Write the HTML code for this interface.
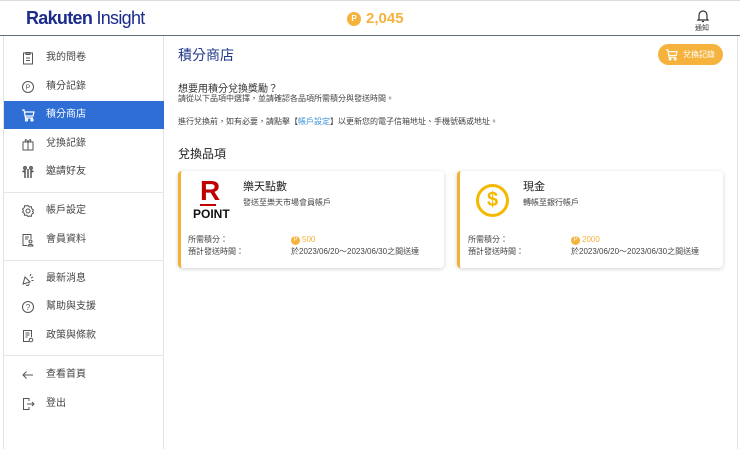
<!DOCTYPE html>
<html><head><meta charset="utf-8"><style>
*{margin:0;padding:0;box-sizing:border-box}
body{width:740px;height:449px;background:#fff;font-family:"Liberation Sans","Noto Sans CJK TC",sans-serif;position:relative;overflow:hidden;color:#333}
.a{position:absolute}
.hdr{left:0;top:0;width:740px;height:36px;border-top:1px solid #ddd;border-bottom:1px solid #5b6f7f;background:#fff}
.side{left:3px;top:36px;width:161px;height:413px;border-right:1px solid #e3e3e3;border-left:1px solid #e3e3e3}
.it{position:absolute;left:0;width:160px;height:28px;font-size:10px;color:#444;line-height:28px;padding-left:42px}
.it svg{position:absolute;left:17px;top:7px}
.act{background:#2f6fd5;color:#fff}
.dv{position:absolute;left:0;width:160px;height:1px;background:#e6e6e6}
.card{width:266px;height:97px;background:#fff;border-left:3px solid #f2b136;border-radius:4px;box-shadow:0 1px 4px rgba(0,0,0,.18)}
.sm{font-size:8px;color:#444;line-height:10px}
.pt{display:flex;align-items:center;font-size:8px;color:#f5b23d;line-height:10px}
.coin{display:inline-block;width:9px;height:9px;border-radius:50%;background:#f5b23d;color:#fff;font-size:6px;line-height:9px;text-align:center;margin-right:2px}
</style></head><body>
<div class="a hdr"></div>
<div class="a" style="left:26px;top:8px;font-size:18px;color:#1c2c8c;letter-spacing:-0.7px"><b style="font-weight:700">Rakuten</b> <span style="font-weight:400">Insight</span></div>
<div class="a" style="left:347px;top:12px;width:14px;height:14px;border-radius:50%;background:#f5b23d;color:#fff;font-size:8px;text-align:center;line-height:14px;font-weight:bold">P</div>
<div class="a" style="left:366px;top:10px;font-size:15px;font-weight:bold;color:#f5b23d">2,045</div>
<svg class="a" style="left:696px;top:9px" width="14" height="14" viewBox="0 0 14 14" fill="none" stroke="#333" stroke-width="1.2"><path d="M3 10V6a4 4 0 0 1 8 0v4l1 1H2z"/><path d="M6 12.5h2"/></svg>
<div class="a" style="left:695px;top:23px;font-size:7px;color:#333">通知</div>
<div class="a side">
<div class="it" style="top:8px"><svg width="14" height="14" viewBox="0 0 14 14" fill="none" stroke="#555"><rect x="2.5" y="2" width="9" height="11"/><path d="M5 1.5h4v2H5zM5 7h4M5 9.5h4"/></svg>我的問卷</div>
<div class="it" style="top:37px"><svg width="14" height="14" viewBox="0 0 14 14" fill="none" stroke="#555"><circle cx="7" cy="7" r="5.5"/><text x="7" y="9.5" font-size="7" text-anchor="middle" fill="#555" stroke="none">P</text></svg>積分記錄</div>
<div class="it act" style="top:65px"><svg width="14" height="14" viewBox="0 0 14 14" fill="none" stroke="#fff" stroke-width="1.2"><path d="M1 2h2l1.5 8h7.5M4 4h9l-1 4H4.5"/><circle cx="5.5" cy="12" r="1"/><circle cx="11" cy="12" r="1"/></svg>積分商店</div>
<div class="it" style="top:94px"><svg width="14" height="14" viewBox="0 0 14 14" fill="none" stroke="#555"><rect x="2" y="5" width="10" height="8"/><path d="M1.5 5h11M7 5v8M7 5C5 1 3 3 5 5M7 5c2-4 4-2 2 0"/></svg>兌換記錄</div>
<div class="it" style="top:122px"><svg width="14" height="14" viewBox="0 0 14 14" fill="none" stroke="#555" stroke-width="1.5"><circle cx="4" cy="3" r="1.2"/><circle cx="10" cy="3" r="1.2"/><path d="M4 5v8M10 5v8M1.5 6l2.5 1M12.5 6l-2.5 1M7 4v9"/></svg>邀請好友</div>
<div class="dv" style="top:156px"></div>
<div class="it" style="top:161px"><svg width="14" height="14" viewBox="0 0 14 14" fill="none" stroke="#555"><circle cx="7" cy="7" r="2"/><path d="M7 1.5l1.3 1.5 2-.4.4 2L12.5 6l-1 1.5 1 1.5-1.8 1.4-.4 2-2-.4L7 12.5l-1.3-1.5-2 .4-.4-2L1.5 8l1-1.5-1-1.5 1.8-1.4.4-2 2 .4z"/></svg>帳戶設定</div>
<div class="it" style="top:190px"><svg width="14" height="14" viewBox="0 0 14 14" fill="none" stroke="#555"><path d="M6 12.5H2V1.5h8V6"/><path d="M4 4h4M4 6h3"/><circle cx="9.5" cy="8.5" r="1.5"/><path d="M7 13c0-2 5-2 5 0z"/></svg>會員資料</div>
<div class="dv" style="top:224px"></div>
<div class="it" style="top:229px"><svg width="14" height="14" viewBox="0 0 14 14" fill="none" stroke="#555"><path d="M2 12l2-7 5 5zM5 12.5a1.5 1.5 0 0 0 3-1M9 4l1-2M10 6l2-1M10.5 8.5h2"/></svg>最新消息</div>
<div class="it" style="top:257px"><svg width="14" height="14" viewBox="0 0 14 14" fill="none" stroke="#555"><circle cx="7" cy="7" r="5.5"/><text x="7" y="10" font-size="8" text-anchor="middle" fill="#555" stroke="none">?</text></svg>幫助與支援</div>
<div class="it" style="top:286px"><svg width="14" height="14" viewBox="0 0 14 14" fill="none" stroke="#555"><path d="M8 12.5H2.5v-11h8V8M4.5 4h4M4.5 6h4M4.5 8h2"/><circle cx="10" cy="11" r="1.8"/></svg>政策與條款</div>
<div class="dv" style="top:319px"></div>
<div class="it" style="top:325px"><svg width="14" height="14" viewBox="0 0 14 14" fill="none" stroke="#555"><path d="M12 7H2M5.5 3.5L2 7l3.5 3.5"/></svg>查看首頁</div>
<div class="it" style="top:354px"><svg width="14" height="14" viewBox="0 0 14 14" fill="none" stroke="#555"><path d="M8 4V1.5H2.5v11H8V10M6 7h7M11 5l2 2-2 2"/></svg>登出</div>
</div>
<div class="a" style="left:178px;top:45px;font-size:14px;color:#1f3a8a">積分商店</div>
<div class="a" style="left:658px;top:44px;width:65px;height:21px;border-radius:11px;background:#f5b23d;color:#fff;font-size:8px;line-height:21px;padding-left:25px">兌換記錄</div>
<svg class="a" style="left:665px;top:48px" width="13" height="13" viewBox="0 0 14 14" fill="none" stroke="#fff" stroke-width="1.2"><path d="M1 2h2l1.5 8h7.5M4 4h9l-1 4H4.5"/><circle cx="5.5" cy="12" r="1"/><circle cx="11" cy="12" r="1"/></svg>
<div class="a" style="left:178px;top:80px;font-size:10px;color:#333">想要用積分兌換獎勵？</div>
<div class="a sm" style="left:178px;top:94px">請從以下品項中選擇，並請確認各品項所需積分與發送時間。</div>
<div class="a sm" style="left:178px;top:117px">進行兌換前，如有必要，請點擊【<span style="color:#3a8fd8">帳戶設定</span>】以更新您的電子信箱地址、手機號碼或地址。</div>
<div class="a" style="left:178px;top:145px;font-size:12px;color:#222">兌換品項</div>
<div class="a card" style="left:178px;top:171px"></div>
<div class="a card" style="left:457px;top:171px"></div>
<div class="a" style="left:200px;top:176px;font-size:28px;font-weight:bold;color:#bf0000;line-height:30px">R</div>
<div class="a" style="left:200px;top:204px;width:16px;height:2px;background:#bf0000"></div>
<div class="a" style="left:193px;top:207px;font-size:12px;font-weight:bold;color:#111">POINT</div>
<div class="a" style="left:243px;top:178px;font-size:11px;color:#222">樂天點數</div>
<div class="a sm" style="left:243px;top:198px">發送至樂天市場會員帳戶</div>
<div class="a sm" style="left:188px;top:235px">所需積分：</div>
<div class="a sm" style="left:188px;top:247px">預計發送時間：</div>
<div class="a pt" style="left:291px;top:235px"><span class="coin">P</span>500</div>
<div class="a sm" style="left:291px;top:247px">於2023/06/20～2023/06/30之間送達</div>
<div class="a" style="left:476px;top:184px;width:33px;height:33px;border-radius:50%;border:3px solid #f5b800;color:#f5b800;font-size:20px;font-weight:bold;text-align:center;line-height:27px">$</div>
<div class="a" style="left:523px;top:178px;font-size:11px;color:#222">現金</div>
<div class="a sm" style="left:523px;top:198px">轉帳至銀行帳戶</div>
<div class="a sm" style="left:468px;top:235px">所需積分：</div>
<div class="a sm" style="left:468px;top:247px">預計發送時間：</div>
<div class="a pt" style="left:571px;top:235px"><span class="coin">P</span>2000</div>
<div class="a sm" style="left:571px;top:247px">於2023/06/20～2023/06/30之間送達</div>
<div class="a" style="left:737px;top:36px;width:1px;height:413px;background:#e3e3e3"></div>
</body></html>
